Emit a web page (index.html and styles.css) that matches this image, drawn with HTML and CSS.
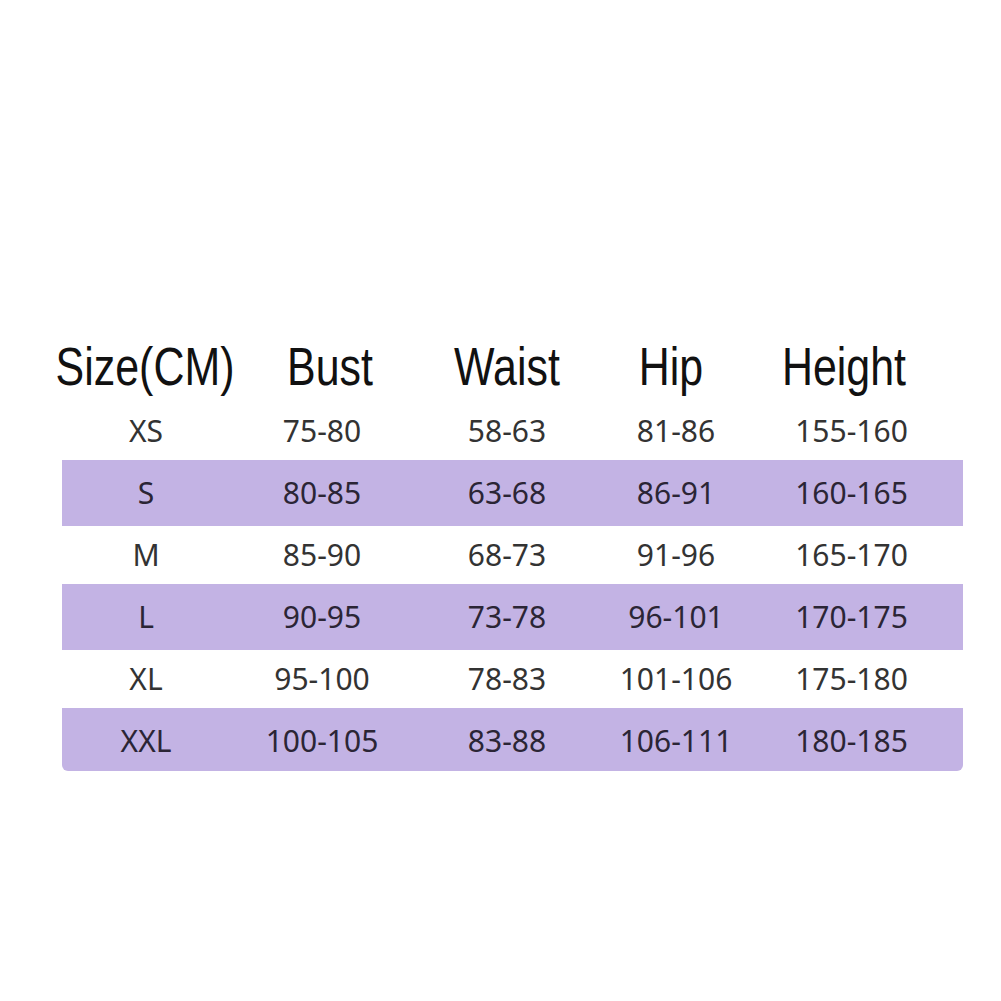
FILE: index.html
```html
<!DOCTYPE html>
<html>
<head>
<meta charset="utf-8">
<link rel="stylesheet" href="styles.css">
</head>
<body>
<div class="chart">
  <div class="head">
    <div>Size(CM)</div>
    <div>Bust</div>
    <div>Waist</div>
    <div>Hip</div>
    <div>Height</div>
  </div>
  <div class="table">
    <div class="row"><div>XS</div><div>75-80</div><div>58-63</div><div>81-86</div><div>155-160</div></div>
    <div class="row band"><div>S</div><div>80-85</div><div>63-68</div><div>86-91</div><div>160-165</div></div>
    <div class="row"><div>M</div><div>85-90</div><div>68-73</div><div>91-96</div><div>165-170</div></div>
    <div class="row band"><div>L</div><div>90-95</div><div>73-78</div><div>96-101</div><div>170-175</div></div>
    <div class="row"><div>XL</div><div>95-100</div><div>78-83</div><div>101-106</div><div>175-180</div></div>
    <div class="row band last"><div>XXL</div><div>100-105</div><div>83-88</div><div>106-111</div><div>180-185</div></div>
  </div>
</div>
</body>
</html>
```
FILE: styles.css
```css
html, body {
  margin: 0;
  padding: 0;
  background: #ffffff;
}
.chart {
  padding: 340px 0 0 56px;
}
.head {
  display: grid;
  grid-template-columns: 178px 192px 162px 166px 180px;
  font-family: "Liberation Sans", Arial, sans-serif;
  font-size: 53px;
  line-height: 53px;
  color: #111111;
  margin-bottom: 9px;
}
.head > div {
  display: flex;
  justify-content: center;
  white-space: nowrap;
  transform: scaleX(0.81);
  transform-origin: center;
}
.table {
  margin-left: 6px;
  width: 901px;
}
.row {
  display: grid;
  grid-template-columns: 168px 184px 186px 152px 199px;
  height: 58px;
  line-height: 58px;
  font-family: "Noto Sans", sans-serif;
  font-size: 30px;
  color: #333333;
  text-align: center;
}
.row.band {
  background: #c3b3e4;
  height: 66px;
  line-height: 66px;
  color: #2b2535;
}
.row.last {
  height: 63px;
  line-height: 66px;
  border-radius: 0 0 6px 6px;
}
```
